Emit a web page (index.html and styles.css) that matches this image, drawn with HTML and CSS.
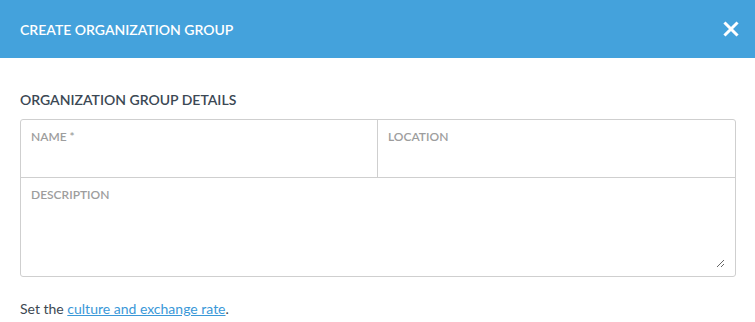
FILE: index.html
```html
<!DOCTYPE html>
<html lang="en">
<head>
<meta charset="utf-8">
<title>Create Organization Group</title>
<link rel="stylesheet" href="styles.css">
</head>
<body>
<div class="modal">
  <header class="modal-header">
    <h1 class="modal-title">CREATE ORGANIZATION GROUP</h1>
    <button class="close-btn" aria-label="Close">
      <svg width="16" height="16" viewBox="0 0 16 16" aria-hidden="true"><path d="M2.5 2.5 L13.5 13.5 M13.5 2.5 L2.5 13.5" stroke="#fff" stroke-width="3" stroke-linecap="square"/></svg>
    </button>
  </header>
  <main class="modal-body">
    <h2 class="section-title">ORGANIZATION GROUP DETAILS</h2>
    <div class="fields">
      <label class="field field-name">
        <span class="field-label">NAME *</span>
        <input class="field-input" type="text">
      </label>
      <label class="field field-location">
        <span class="field-label">LOCATION</span>
        <input class="field-input" type="text">
      </label>
      <label class="field field-desc">
        <span class="field-label">DESCRIPTION</span>
        <textarea class="field-textarea"></textarea>
      </label>
    </div>
    <p class="note">Set the <a href="#" class="link">culture and exchange rate</a>.</p>
  </main>
</div>
</body>
</html>
```
FILE: styles.css
```css
* { box-sizing: border-box; }
html, body { margin: 0; padding: 0; background: #fff; }
body { font-family: Lato, "Open Sans", "Liberation Sans", sans-serif; color: #3d4852; }

.modal-header {
  height: 58px;
  background: #44a2dc;
  display: flex;
  align-items: center;
  justify-content: space-between;
  padding: 0 16px 0 20px;
}
.modal-title {
  margin: 0;
  font-size: 14px;
  font-weight: 600;
  color: #fff;
  letter-spacing: 0;
}
.close-btn {
  background: none;
  border: 0;
  padding: 0;
  width: 16px;
  height: 16px;
  display: flex;
  cursor: pointer;
}

.modal-body { padding: 0 19px 0 20px; }
.section-title {
  margin: 0;
  padding-top: 33px;
  font-size: 14px;
  font-weight: 600;
  color: #3b4854;
  line-height: 17px;
}
.fields {
  margin-top: 11px;
  display: grid;
  grid-template-columns: 1fr 1fr;
  grid-template-rows: 58px 98px;
  border: 1px solid #cfcfcf;
  border-radius: 3px;
}
.field {
  display: flex;
  flex-direction: column;
  padding: 10px 10px 8px 10px;
}
.field-name { border-right: 1px solid #cfcfcf; border-bottom: 1px solid #cfcfcf; }
.field-location { border-bottom: 1px solid #cfcfcf; }
.field-desc { grid-column: 1 / 3; }
.field-label {
  font-size: 12px;
  font-weight: 600;
  color: #9d9d9d;
  line-height: 14px;
}
.field-input {
  border: 0;
  outline: none;
  font: inherit;
  padding: 0;
  margin-top: 4px;
}
.field-textarea {
  flex: 1;
  border: 0;
  outline: none;
  font: inherit;
  padding: 0;
  margin-top: 4px;
  resize: vertical;
}
.note {
  margin: 23px 0 0;
  font-size: 14px;
  color: #3d4852;
  line-height: 17px;
}
.link { color: #3a98d8; text-decoration: underline; }
```
